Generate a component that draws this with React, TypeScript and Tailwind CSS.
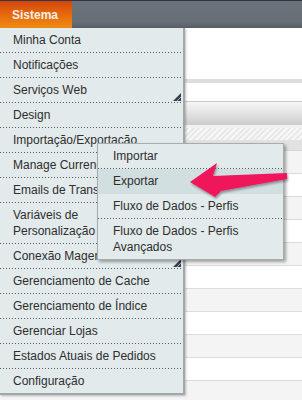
import React from "react";

const Sep = () => (
  <div className="h-px w-full bg-[linear-gradient(to_right,#5a5a5a_1px,transparent_1px)] bg-size-[3px_1px] bg-repeat-x" />
);

const Grip = () => (
  <svg width="8" height="8" viewBox="0 0 8 8" className="absolute right-[2px] bottom-[1px]">
    <path d="M8 0 L8 8 L0 8 Z" fill="#34414d" />
    <path d="M8.5 3.5 L3.5 8.5" stroke="#a9b6bf" strokeWidth="1" />
  </svg>
);

type Item = { label: React.ReactNode; grip?: boolean };

const items: Item[] = [
  { label: "Minha Conta" },
  { label: "Notificações" },
  { label: "Serviços Web", grip: true },
  { label: "Design" },
  { label: "Importação/Exportação" },
  { label: "Manage Currencies" },
  { label: "Emails de Transação" },
  {
    label: (
      <>
        Variáveis de
        <br />
        Personalização
      </>
    ),
  },
  { label: "Conexão Magento", grip: true },
  { label: "Gerenciamento de Cache" },
  { label: "Gerenciamento de Índice" },
  { label: "Gerenciar Lojas" },
  { label: "Estados Atuais de Pedidos" },
  { label: "Configuração" },
];

const sub: { label: React.ReactNode; active?: boolean }[] = [
  { label: "Importar" },
  { label: "Exportar", active: true },
  { label: "Fluxo de Dados - Perfis" },
  {
    label: (
      <>
        Fluxo de Dados - Perfis
        <br />
        Avançados
      </>
    ),
  },
];

export default function App() {
  const rows = Array.from({ length: 11 });
  return (
    <div className="relative w-[302px] h-[400px] overflow-hidden bg-white font-['Liberation_Sans',Arial,sans-serif] text-[12px] text-[#2e2e2e]">
      <header className="h-[28px] flex items-end bg-[linear-gradient(#2b3945_0,#2b3945_1px,#6b7279_1px,#676e75_22px,#575e65_28px)]">
        <div className="h-[27px] w-[72px] pl-3 flex items-center font-bold text-[#f6efe8] bg-[linear-gradient(#d5460d,#e8700e_60%,#f08c12)]">
          Sistema
        </div>
      </header>

      <main>
        <div className="h-[51px]" />
        <div className="h-[4px] bg-[#dedede]" />
        <div className="h-[19px] border-b border-[#c9c9c9]" />
        <div className="h-[23px] bg-[linear-gradient(#f6f6f6,#e3e3e3_50%,#cbcbcb)]" />
        <div className="h-[3px] bg-[#f2f2f2]" />
        <div className="h-[12px] bg-[repeating-linear-gradient(135deg,#e9e9e9_0,#e9e9e9_2px,#f7f7f7_2px,#f7f7f7_4px)]" />
        <div className="h-[11px] bg-[#e2e2e2] border-b border-[#d6d6d6]" />
        {rows.map((_, i) => (
          <div
            key={i}
            className={
              i % 2 === 0
                ? "h-[23px] bg-[#f4f4f4] border-b border-[#dcdcdc]"
                : "h-[23px] bg-white border-b border-[#dcdcdc]"
            }
          />
        ))}
      </main>

      <nav className="absolute left-0 top-[28px] w-[185px] bg-[#e2eaeb] border-r-2 border-b-2 border-r-[#a2a8aa] border-b-[#a2a8aa] shadow-[1px_1px_2px_rgba(0,0,0,0.25)]">
        {items.map((it, i) => (
          <div key={i}>
            <div className="relative py-1 pl-[13px] leading-4 whitespace-nowrap overflow-hidden">
              {it.label}
              {it.grip && <Grip />}
            </div>
            {i < items.length - 1 && <Sep />}
          </div>
        ))}
      </nav>

      <div className="absolute left-[97px] top-[143px] w-[187px] bg-[#e2eaeb] border border-[#a7adaf] shadow-[2px_2px_3px_rgba(0,0,0,0.35)]">
        {sub.map((it, i) => (
          <div key={i}>
            <div
              className={
                it.active
                  ? "py-1 pl-[15px] leading-4 bg-[#d2dfe1]"
                  : "py-1 pl-[15px] leading-4"
              }
            >
              {it.label}
            </div>
            {i < sub.length - 1 && (it.active ? <div className="h-px bg-[#d2dfe1]" /> : <Sep />)}
          </div>
        ))}
      </div>

      <svg
        className="absolute left-0 top-0 pointer-events-none"
        width="302"
        height="400"
        viewBox="0 0 302 400"
      >
        <defs>
          <filter id="sh" x="-10%" y="-20%" width="130%" height="160%">
            <feDropShadow dx="1" dy="2" stdDeviation="1.2" floodColor="#000" floodOpacity="0.35" />
          </filter>
        </defs>
        <polygon
          points="190,182 217,163 213,176 287,173 287,179 221,191 215,197"
          fill="#f0145c"
          filter="url(#sh)"
        />
      </svg>
    </div>
  );
}
